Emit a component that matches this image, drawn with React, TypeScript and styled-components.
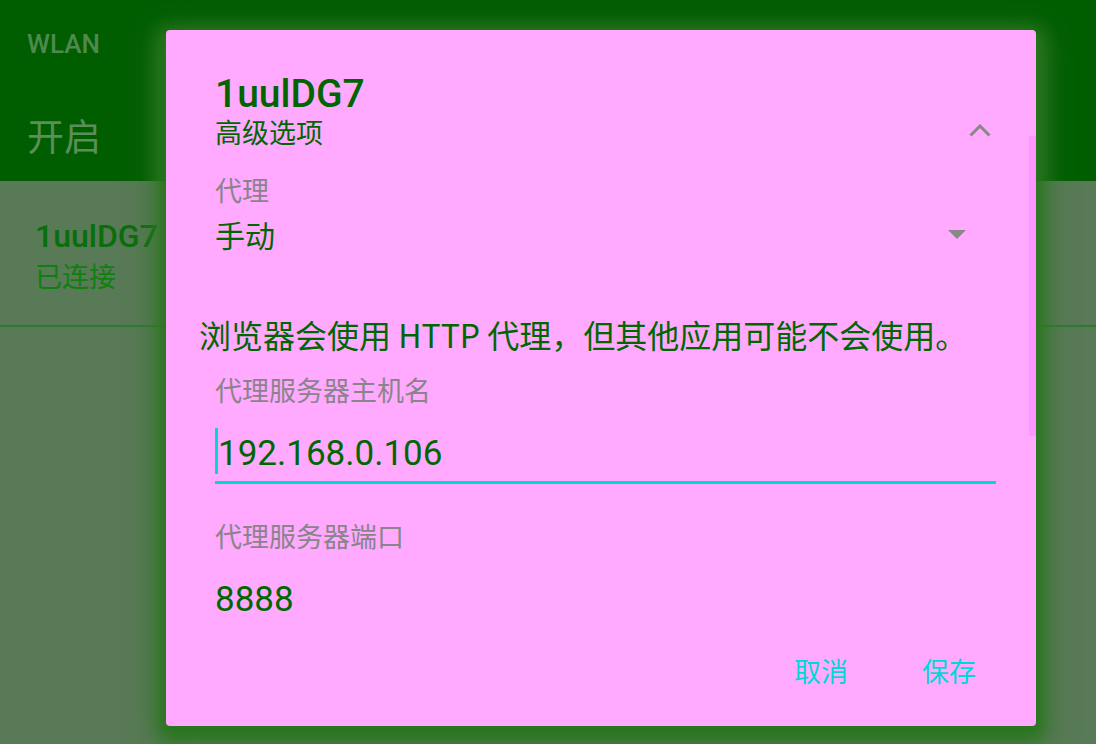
import React from "react";
import styled, { createGlobalStyle } from "styled-components";

const GlobalStyle = createGlobalStyle`
  html, body {
    margin: 0;
    padding: 0;
    width: 1096px;
    height: 744px;
    overflow: hidden;
  }
  body {
    font-family: Roboto, "Noto Sans CJK SC", sans-serif;
  }
`;

const Screen = styled.div`
  position: relative;
  width: 1096px;
  height: 744px;
  display: flex;
  flex-direction: column;
  background: #587a56;
`;

const AppBar = styled.header`
  height: 181px;
  background: #005e00;
  display: flex;
  flex-direction: column;
  padding-left: 27px;
  box-sizing: border-box;
`;

const BarTitle = styled.div`
  margin-top: 28px;
  font-size: 26px;
  line-height: 32px;
  font-weight: 500;
  color: #4e8a4e;
`;

const SwitchLabel = styled.div`
  margin-top: 53px;
  font-size: 37px;
  line-height: 44px;
  color: #5a8f5a;
  font-family: "Noto Sans CJK SC", sans-serif;
`;

const NetworkRow = styled.div`
  height: 146px;
  border-bottom: 2px solid #2f7a2f;
  box-sizing: border-box;
  padding: 37px 0 0 35px;
  display: flex;
  flex-direction: column;
`;

const NetworkName = styled.div`
  font-size: 32px;
  line-height: 36px;
  font-weight: 500;
  color: #0a6e0a;
`;

const NetworkStatus = styled.div`
  margin-top: 4px;
  font-size: 27px;
  line-height: 36px;
  color: #0f800f;
  font-family: "Noto Sans CJK SC", sans-serif;
`;

const Dialog = styled.div`
  position: absolute;
  left: 166px;
  top: 30px;
  width: 870px;
  height: 696px;
  box-sizing: border-box;
  background: #ffaaff;
  border-radius: 4px;
  box-shadow: 0 6px 16px 8px rgba(40, 118, 30, 1),
    0 10px 30px 12px rgba(60, 120, 50, 0.6);
  padding: 42px 40px 0 49px;
  display: flex;
  flex-direction: column;
  font-family: "Noto Sans CJK SC", sans-serif;
  color: #006600;
`;

const ScrollThumb = styled.div`
  position: absolute;
  right: 0;
  top: 106px;
  width: 7px;
  height: 300px;
  background: #ff96ff;
`;

const Header = styled.div`
  display: flex;
  align-items: flex-end;
  justify-content: space-between;
`;

const TitleBlock = styled.div`
  display: flex;
  flex-direction: column;
`;

const Title = styled.div`
  font-family: Roboto, sans-serif;
  font-size: 39px;
  line-height: 44px;
  font-weight: 500;
  color: #006400;
`;

const Subtitle = styled.div`
  font-size: 27px;
  line-height: 32px;
`;

const Chevron = styled.svg`
  margin: 0 5px 11px 0;
`;

const Label = styled.div<{ $gap: number }>`
  margin-top: ${(p) => p.$gap}px;
  font-size: 27px;
  line-height: 36px;
  color: #8a848a;
`;

const SelectRow = styled.div`
  margin-top: 8px;
  display: flex;
  align-items: center;
  justify-content: space-between;
  font-size: 30px;
  line-height: 36px;
`;

const Caret = styled.svg`
  margin-right: 30px;
`;

const Note = styled.div`
  margin: 62px 0 0 -16px;
  font-size: 32px;
  line-height: 40px;
  white-space: nowrap;
`;

const InputField = styled.div`
  margin-top: 12px;
  padding: 8px 0 1px 0;
  border-bottom: 3px solid #00d8d8;
  display: flex;
  align-items: flex-start;
  font-family: Roboto, sans-serif;
  font-size: 35px;
  line-height: 52px;
`;

const Cursor = styled.span`
  display: inline-block;
  width: 3px;
  height: 46px;
  background: #00d8d8;
`;

const Value = styled.div`
  margin-top: 26px;
  font-family: Roboto, sans-serif;
  font-size: 35px;
  line-height: 40px;
`;

const Actions = styled.div`
  margin: 33px 20px 0 0;
  display: flex;
  justify-content: flex-end;
  gap: 74px;
`;

const ActionButton = styled.button`
  border: none;
  background: none;
  padding: 0;
  font-family: "Noto Sans CJK SC", sans-serif;
  font-size: 27px;
  line-height: 36px;
  color: #00d8d8;
  cursor: pointer;
`;

export default function App() {
  return (
    <>
      <GlobalStyle />
      <Screen>
        <AppBar>
          <BarTitle>WLAN</BarTitle>
          <SwitchLabel>开启</SwitchLabel>
        </AppBar>
        <NetworkRow>
          <NetworkName>1uulDG7</NetworkName>
          <NetworkStatus>已连接</NetworkStatus>
        </NetworkRow>

        <Dialog>
          <ScrollThumb />
          <Header>
            <TitleBlock>
              <Title>1uulDG7</Title>
              <Subtitle>高级选项</Subtitle>
            </TitleBlock>
            <Chevron width="22" height="13" viewBox="0 0 22 13">
              <path d="M1.5 11.5 L11 2 L20.5 11.5" fill="none" stroke="#888" strokeWidth="3" />
            </Chevron>
          </Header>

          <Label $gap={24}>代理</Label>
          <SelectRow>
            <span>手动</span>
            <Caret width="18" height="9" viewBox="0 0 18 9">
              <path d="M0 0 H18 L9 9 Z" fill="#888" />
            </Caret>
          </SelectRow>

          <Note>浏览器会使用 HTTP 代理，但其他应用可能不会使用。</Note>

          <Label $gap={18}>代理服务器主机名</Label>
          <InputField>
            <Cursor />
            <span>192.168.0.106</span>
          </InputField>

          <Label $gap={34}>代理服务器端口</Label>
          <Value>8888</Value>

          <Actions>
            <ActionButton>取消</ActionButton>
            <ActionButton>保存</ActionButton>
          </Actions>
        </Dialog>
      </Screen>
    </>
  );
}
